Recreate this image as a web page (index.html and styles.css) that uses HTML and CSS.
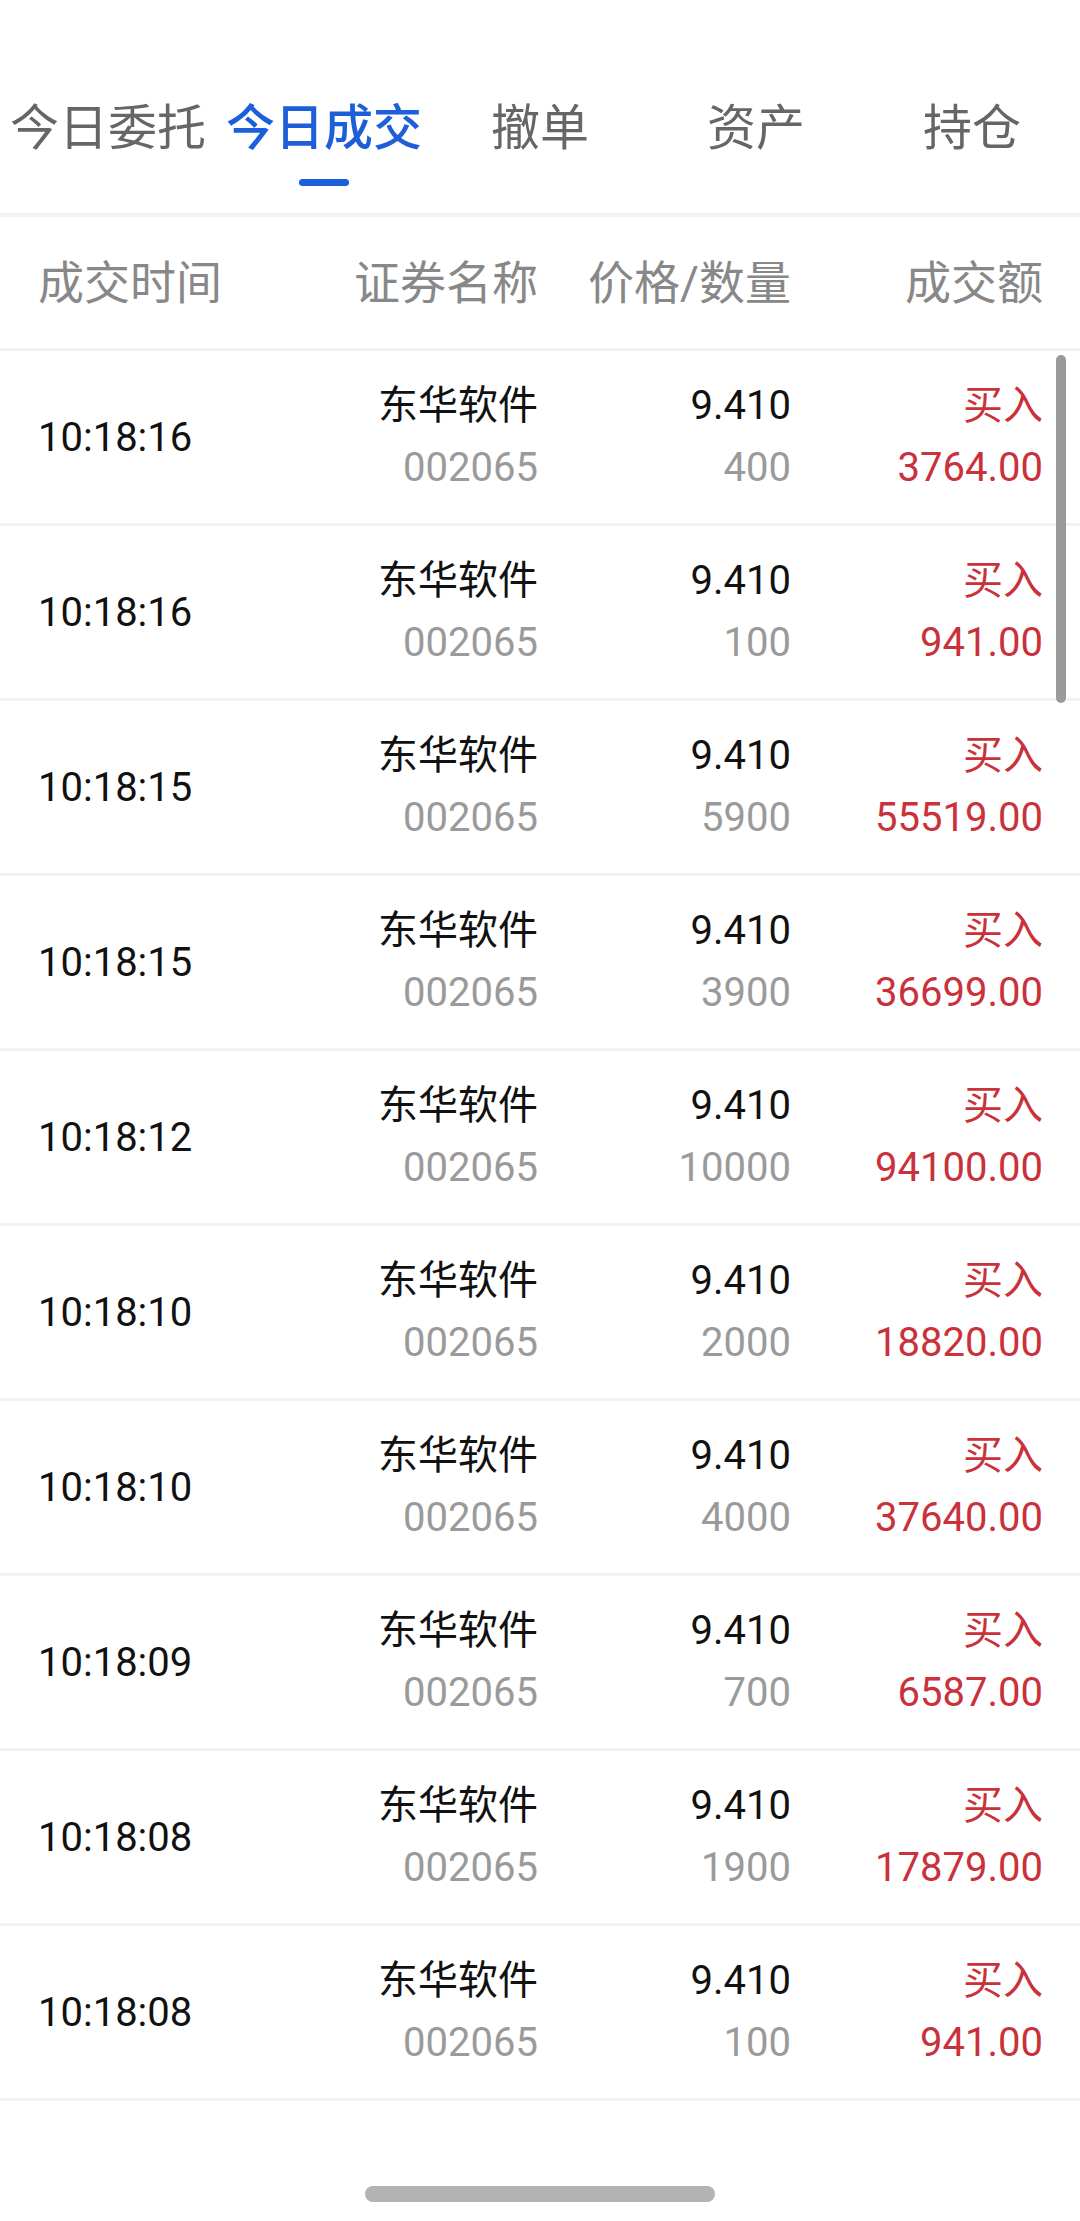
FILE: index.html
```html
<!DOCTYPE html>
<html lang="zh-CN">
<head>
    <meta charset="UTF-8">
    <title>今日成交</title>
    <link rel="stylesheet" href="styles.css">
</head>
<body>
    <div class="page">
        <ul class="tabs">
            <li>今日委托</li>
            <li class="on">今日成交<i></i></li>
            <li>撤单</li>
            <li>资产</li>
            <li>持仓</li>
        </ul>
        <div class="head">
            <span class="c1">成交时间</span>
            <span class="c2">证券名称</span>
            <span class="c3">价格/数量</span>
            <span class="c4">成交额</span>
        </div>
        <div class="list">
            <div class="row"><span class="c1">10:18:16</span><span class="c2"><b>东华软件</b><em>002065</em></span><span class="c3"><b>9.410</b><em>400</em></span><span class="c4 red"><b>买入</b><b>3764.00</b></span></div>
            <div class="row"><span class="c1">10:18:16</span><span class="c2"><b>东华软件</b><em>002065</em></span><span class="c3"><b>9.410</b><em>100</em></span><span class="c4 red"><b>买入</b><b>941.00</b></span></div>
            <div class="row"><span class="c1">10:18:15</span><span class="c2"><b>东华软件</b><em>002065</em></span><span class="c3"><b>9.410</b><em>5900</em></span><span class="c4 red"><b>买入</b><b>55519.00</b></span></div>
            <div class="row"><span class="c1">10:18:15</span><span class="c2"><b>东华软件</b><em>002065</em></span><span class="c3"><b>9.410</b><em>3900</em></span><span class="c4 red"><b>买入</b><b>36699.00</b></span></div>
            <div class="row"><span class="c1">10:18:12</span><span class="c2"><b>东华软件</b><em>002065</em></span><span class="c3"><b>9.410</b><em>10000</em></span><span class="c4 red"><b>买入</b><b>94100.00</b></span></div>
            <div class="row"><span class="c1">10:18:10</span><span class="c2"><b>东华软件</b><em>002065</em></span><span class="c3"><b>9.410</b><em>2000</em></span><span class="c4 red"><b>买入</b><b>18820.00</b></span></div>
            <div class="row"><span class="c1">10:18:10</span><span class="c2"><b>东华软件</b><em>002065</em></span><span class="c3"><b>9.410</b><em>4000</em></span><span class="c4 red"><b>买入</b><b>37640.00</b></span></div>
            <div class="row"><span class="c1">10:18:09</span><span class="c2"><b>东华软件</b><em>002065</em></span><span class="c3"><b>9.410</b><em>700</em></span><span class="c4 red"><b>买入</b><b>6587.00</b></span></div>
            <div class="row"><span class="c1">10:18:08</span><span class="c2"><b>东华软件</b><em>002065</em></span><span class="c3"><b>9.410</b><em>1900</em></span><span class="c4 red"><b>买入</b><b>17879.00</b></span></div>
            <div class="row"><span class="c1">10:18:08</span><span class="c2"><b>东华软件</b><em>002065</em></span><span class="c3"><b>9.410</b><em>100</em></span><span class="c4 red"><b>买入</b><b>941.00</b></span></div>
            <div class="scroll"></div>
        </div>
        <div class="home"><span></span></div>
    </div>
</body>
</html>
```

FILE: styles.css
```css
*{margin: 0;padding: 0;box-sizing: border-box;}
body{background: #fff;font-family: Roboto, "Noto Sans CJK SC", sans-serif;color: #111;}
.page{width: 1080px;}

.tabs{display: grid;grid-template-columns: repeat(5, 1fr);padding-top: 97px;height: 217px;border-bottom: 4px solid #f2f2f2;}
.tabs li{list-style: none;text-align: center;font-size: 49px;line-height: 64px;color: #666;display: flex;flex-direction: column;align-items: center;}
.tabs li.on{color: #1d5fd8;font-weight: 500;}
.tabs li i{display: block;width: 50px;height: 7px;border-radius: 4px;background: #1d5fd8;margin-top: 18px;}

.head,.row{display: grid;grid-template-columns: 300px 200px 253px 252px;padding: 0 37px 0 38px;align-items: center;}
.head{height: 134px;padding-bottom: 8px;border-bottom: 3px solid #f2f2f2;font-size: 46px;color: #888;}
.c2,.c3,.c4{text-align: right;}

.list{position: relative;}
.row{height: 175px;border-bottom: 3px solid #f2f2f2;font-size: 40px;}
.row .c1{color: #111;}
.row b,.row em{display: block;font-weight: normal;font-style: normal;line-height: 62px;}
.row em{color: #9a9a9a;}
.row .red{color: #c9313b;}

.scroll{position: absolute;right: 14px;top: 4px;width: 10px;height: 348px;border-radius: 5px;background: #9a9a9a;}

.home{padding-top: 85px;display: flex;justify-content: center;}
.home span{display: block;width: 350px;height: 16px;border-radius: 8px;background: #b3b3b3;}
```
